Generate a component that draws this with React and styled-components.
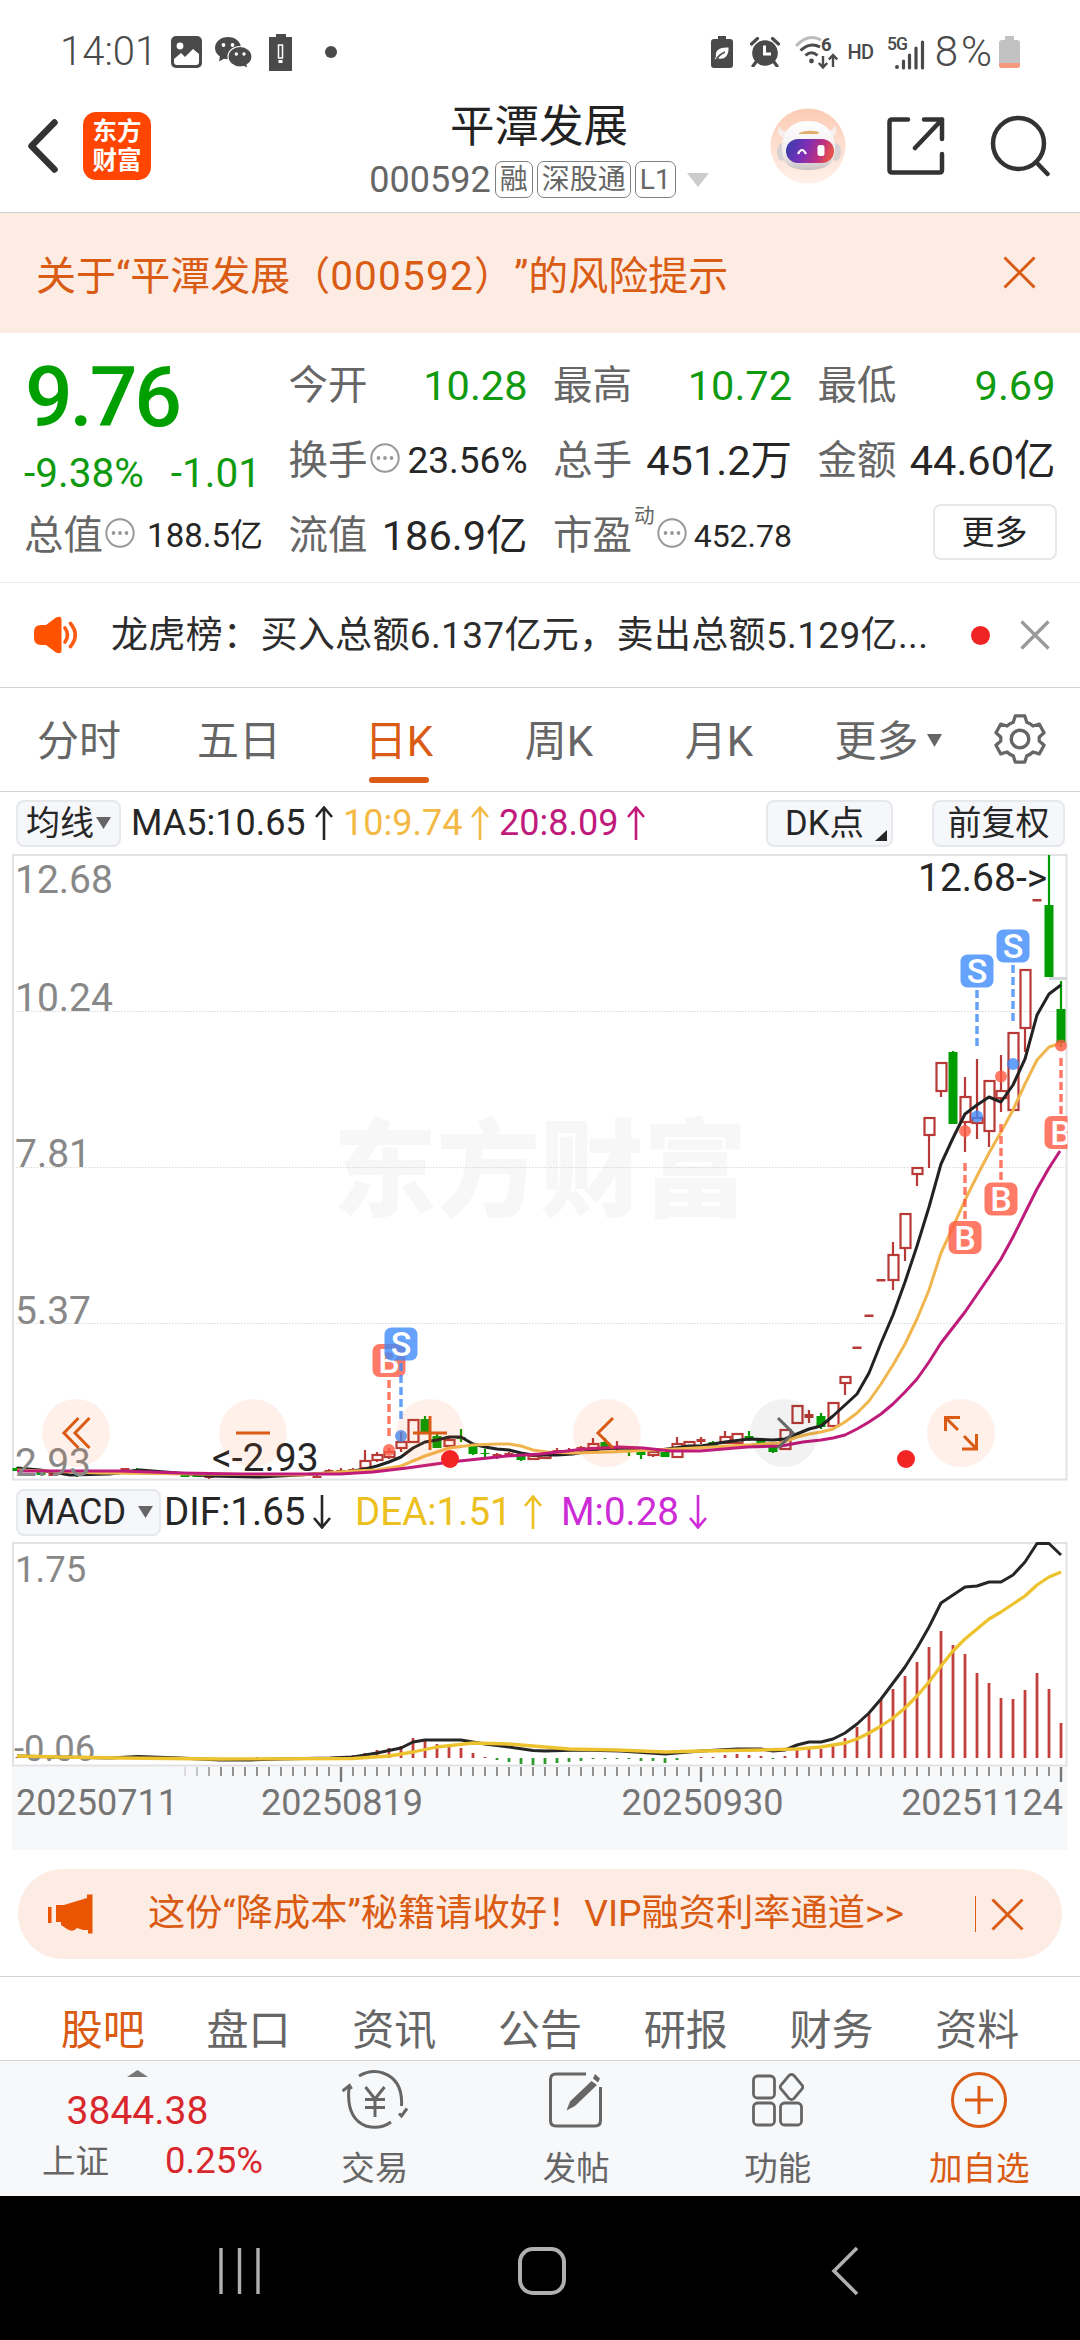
import React from "react";
import styled, { createGlobalStyle } from "styled-components";

const FONT = `Roboto, "Noto Sans CJK SC", "Noto Sans", sans-serif`;
const ORANGE = "#d95b14";
const INK = "#262626";
const GREY = "#666";
const GREEN = "#0f9a0f";

const Global = createGlobalStyle`
  * { box-sizing: border-box; }
  html, body { margin: 0; padding: 0; background: #fff; }
  body { font-family: ${FONT}; line-height: 1; color: ${INK}; text-spacing-trim: space-all; }
  svg { display: block; flex: none; }
`;

const Screen = styled.div`
  width: 1080px;
  height: 2340px;
  display: flex;
  flex-direction: column;
  overflow: hidden;
  background: #fff;
`;

const Txt = styled.span`
  font-size: ${(p) => p.$size}px;
  color: ${(p) => p.$color || INK};
  font-weight: ${(p) => p.$weight || 400};
  letter-spacing: ${(p) => p.$ls || 0}px;
  line-height: 1;
  white-space: nowrap;
`;

/* ---------- status bar ---------- */
const StatusBar = styled.div`
  height: 84px;
  padding: 20px 60px 0 60px;
  display: flex;
  justify-content: space-between;
  align-items: center;
`;
const StatusGroup = styled.div`
  display: flex;
  align-items: center;
`;
const Gap = styled.i`
  width: ${(p) => p.$w}px;
  flex: none;
`;
const DARK = "#4a4a4a";

const PhotoIcon = () => (
  <svg width="31" height="32" viewBox="0 0 31 32">
    <rect width="31" height="32" rx="5" fill={DARK} />
    <circle cx="9" cy="10" r="3.4" fill="#fff" />
    <path d="M3 23 L10 17 L14 21 L22 13 L28 18 V26 Q28 29 25 29 H6 Q3 29 3 26Z" fill="#fff" />
  </svg>
);
const WechatIcon = () => (
  <svg width="38" height="33" viewBox="0 0 38 33">
    <path d="M13 1C5.800 1 0 5.800 0 12c0 3.500 1.900 6.500 4.900 8.600L4 25.500l5-2.800c1.300.3 2.600.5 4 .5 7.200 0 13-5 13-11.200S20.200 1 13 1Z" fill={DARK} />
    <path d="M25 10.500c-6.700 0-12 4.500-12 10.200S18.300 31 25 31c1.300 0 2.600-.2 3.800-.5l4.200 2.300-.9-4C35 27 37 24 37 20.700c0-5.700-5.300-10.200-12-10.200Z" fill={DARK} stroke="#fff" strokeWidth="1.200" />
    <circle cx="8.500" cy="9" r="1.900" fill="#fff" />
    <circle cx="17.500" cy="9" r="1.900" fill="#fff" />
    <circle cx="21.300" cy="18" r="1.700" fill="#fff" />
    <circle cx="29" cy="18" r="1.700" fill="#fff" />
  </svg>
);
const BatteryAlertIcon = () => (
  <svg width="23" height="37" viewBox="0 0 23 37">
    <path d="M7 0h10v3h6v34H0V3h7Z" fill={DARK} />
    <rect x="9.500" y="11" width="4" height="13" fill="none" stroke="#fff" strokeWidth="1.500" />
    <rect x="9.500" y="26" width="4" height="3" fill="#fff" />
  </svg>
);
const LeafBatteryIcon = () => (
  <svg width="22" height="32" viewBox="0 0 22 32">
    <path d="M7 0h8v3h4q3 0 3 3v23q0 3-3 3H3q-3 0-3-3V6q0-3 3-3h4Z" fill={DARK} />
    <path d="M17.500 11.500C9 11 4 14 5 20.500L3.500 23.500l3-1.500C13 24.500 18 20 17.500 11.500Z" fill="#fff" />
    <path d="M5.500 22.500 Q9 18 14 16" stroke={DARK} strokeWidth="1.500" fill="none" />
  </svg>
);
const AlarmIcon = () => (
  <svg width="30" height="30" viewBox="0 0 30 30">
    <circle cx="15" cy="16" r="12.800" fill={DARK} />
    <path d="M1.500 7 L7.500 1.500 M28.500 7 L22.500 1.500 M6 25 L3 29 M24 25 L27 29" stroke={DARK} strokeWidth="3.200" strokeLinecap="round" />
    <path d="M14.500 8.500 V17 H21" stroke="#fff" strokeWidth="3" fill="none" />
  </svg>
);
const WifiIcon = () => (
  <svg width="43" height="39" viewBox="0 -3 43 39">
    <path d="M1 10 Q13 -3 26 4" stroke="#bbb" strokeWidth="3" fill="none" />
    <path d="M5.500 14.500 Q15 5.500 25 11" stroke={DARK} strokeWidth="3" fill="none" />
    <path d="M10.500 19.500 Q16.500 14 22.500 19.500" stroke={DARK} strokeWidth="3" fill="none" />
    <circle cx="16.500" cy="25" r="2.400" fill={DARK} />
    <path d="M28 20V31M23.800 27l4.200 4.500 4.200-4.500M38 31V19.500M33.800 23.500l4.200-4.500 4.200 4.500" stroke={DARK} strokeWidth="2.400" fill="none" />
    <text x="26" y="15" fontSize="18.500" fontWeight="700" fontFamily={FONT} fill={DARK}>6</text>
  </svg>
);
const SignalIcon = () => (
  <svg width="38" height="38" viewBox="0 -2 38 38">
    <text x="0" y="14.500" fontSize="17.500" fontWeight="500" fontFamily={FONT} fill={DARK} textLength="21">5G</text>
    <path d="M16.500 26V33M22.500 20V33M29 13V33M35.500 7V33" stroke={DARK} strokeWidth="3.200" strokeLinecap="round" />
    <circle cx="10" cy="32" r="2" fill={DARK} />
  </svg>
);
const BatteryIcon = () => (
  <svg width="21" height="32" viewBox="0 0 21 32">
    <path d="M6 0h9v4h3q3 0 3 3v22q0 3-3 3H3q-3 0-3-3V7q0-3 3-3h3Z" fill="#c2c2c2" />
    <path d="M0 27h21v2q0 3-3 3H3q-3 0-3-3Z" fill="#f59a7c" />
  </svg>
);

/* ---------- header ---------- */
const Header = styled.header`
  height: 129px;
  padding: 0 29px 5px 27px;
  display: grid;
  grid-template-columns: 1fr auto 1fr;
  align-items: center;
  border-bottom: 1px solid #cfcfd2;
`;
const HeaderSide = styled.div`
  display: flex;
  align-items: center;
  justify-content: ${(p) => (p.$end ? "flex-end" : "flex-start")};
`;
const Logo = styled.div`
  width: 68px;
  height: 68px;
  margin-left: 25px;
  border-radius: 13px;
  background: #ff4500;
  color: #fff;
  font-size: 24.500px;
  font-weight: 700;
  line-height: 29px;
  text-align: center;
  padding-top: 5px;
`;
const TitleBlock = styled.div`
  margin-top: 10px;
  display: flex;
  flex-direction: column;
  align-items: center;
  gap: 10px;
`;
const Title = styled.h1`
  margin: 0;
  font-size: 44.500px;
  font-weight: 400;
  line-height: 48px;
  color: #222;
`;
const SubTitle = styled.div`
  height: 37px;
  display: flex;
  align-items: center;
  gap: 4px;
`;
const Tag = styled.span`
  height: 37px;
  padding: 0 4px;
  border: 1.500px solid #808080;
  border-radius: 7px;
  font-size: 28px;
  line-height: 35px;
  color: ${GREY};
`;

const RobotIcon = () => (
  <svg width="76" height="76" viewBox="0 0 76 76">
    <defs>
      <linearGradient id="halo" x1="0" y1="0" x2="0" y2="1">
        <stop offset="0" stopColor="#fccbb4" />
        <stop offset="1" stopColor="#fff1ea" />
      </linearGradient>
      <linearGradient id="visor" x1="0" y1="0" x2="1" y2="0.200">
        <stop offset="0" stopColor="#2f3fa8" />
        <stop offset="0.450" stopColor="#7a2fb8" />
        <stop offset="0.800" stopColor="#c0307e" />
        <stop offset="1" stopColor="#e2504e" />
      </linearGradient>
      <linearGradient id="shell" x1="0" y1="0" x2="0" y2="1">
        <stop offset="0" stopColor="#fff" />
        <stop offset="0.700" stopColor="#eeeaea" />
        <stop offset="1" stopColor="#c9c2c2" />
      </linearGradient>
    </defs>
    <circle cx="38" cy="38" r="37.500" fill="url(#halo)" />
    <path d="M9 18Q6 28 15 30L20 24Q11 24 9 18ZM65 17Q69 27 60 30L55 24Q64 23 65 17Z" fill="#f4efee" />
    <ellipse cx="12" cy="44" rx="5" ry="9" fill="#d8d2d2" />
    <ellipse cx="66" cy="44" rx="5" ry="9" fill="#d8d2d2" />
    <path d="M38 13C55 13 65 24 65 40C65 56 57 62 38 62S12 56 12 40C12 24 21 13 38 13Z" fill="url(#shell)" />
    <path d="M29 25Q38 21 49 24L48 26H29Z" fill="#e3ab6c" />
    <rect x="16" y="31" width="48" height="24" rx="12" fill="url(#visor)" />
    <path d="M28 46Q32 38 36 46" stroke="#fff" strokeWidth="2.200" fill="none" />
    <rect x="47.500" y="37" width="7" height="11" rx="2.500" fill="#fff" />
  </svg>
);

/* ---------- warning banner ---------- */
const Warning = styled.div`
  height: 120px;
  padding: 6px 44px 0 36px;
  background: #fcece3;
  display: flex;
  align-items: center;
  justify-content: space-between;
  svg { margin-bottom: 8px; }
`;
const Cross = ({ size, color, width }) => (
  <svg width={size} height={size} viewBox={`0 0 ${size} ${size}`}>
    <path d={`M1.500 1.500L${size - 1.5} ${size - 1.5}M${size - 1.5} 1.500L1.500 ${size - 1.5}`} stroke={color} strokeWidth={width} />
  </svg>
);

/* ---------- quote ---------- */
const Quote = styled.section`
  height: 250px;
  padding: 15px 24px 0 24px;
  display: grid;
  grid-template-columns: 239px 239px 239px 238px;
  grid-template-rows: repeat(3, 75px);
  column-gap: 25.500px;
  border-bottom: 1px solid #ebebeb;
`;
const PriceCell = styled.div`
  grid-row: span 2;
  display: flex;
  flex-direction: column;
`;
const Price = styled.div`
  height: 100px;
  padding-left: 1px;
  font-size: 84px;
  font-weight: 500;
  letter-spacing: -3.200px;
  line-height: 100px;
  color: #009f00;
`;
const Change = styled.div`
  display: flex;
  justify-content: space-between;
  height: 50px;
  align-items: center;
  padding-right: 2px;
`;
const Cell = styled.div`
  display: flex;
  align-items: center;
  justify-content: space-between;
`;
const Label = styled.div`
  display: flex;
  align-items: center;
  height: 44px;
  font-size: 39.500px;
  color: ${GREY};
  svg { margin: -6px 0 0 2px; }
`;
const Sup = styled.span`
  font-size: 20.500px;
  margin: -38px 0 0 2px;
`;
const MoreButton = styled.button`
  width: 124px;
  height: 56px;
  margin: 0 -1px 8px auto;
  padding: 0 0 4px;
  border: 2px solid #e6e7ea;
  border-radius: 8px;
  background: #fff;
  font: 33px ${FONT};
  color: ${INK};
`;
const InfoIcon = () => (
  <svg width="30" height="30" viewBox="0 0 30 30">
    <circle cx="15" cy="15" r="13.700" fill="none" stroke="#999" strokeWidth="2" />
    <circle cx="8.500" cy="15" r="1.900" fill="#999" />
    <circle cx="15" cy="15" r="1.900" fill="#999" />
    <circle cx="21.500" cy="15" r="1.900" fill="#999" />
  </svg>
);
const Item = ({ label, value, info, sup, color, size = 41.5 }) => (
  <Cell>
    <Label>
      {label}
      {sup && <Sup>{sup}</Sup>}
      {info && <InfoIcon />}
    </Label>
    <Txt $size={size} $color={color}>{value}</Txt>
  </Cell>
);

/* ---------- news ---------- */
const News = styled.div`
  height: 105px;
  padding: 0 30px 0 34px;
  display: flex;
  align-items: center;
  border-bottom: 1px solid #d4d4d6;
`;
const NewsText = styled.div`
  width: 836px;
  margin-left: 32px;
  font-size: 37px;
  letter-spacing: 0.350px;
  white-space: nowrap;
  color: #2c2c2c;
`;
const Dot = styled.i`
  width: ${(p) => p.$d}px;
  height: ${(p) => p.$d}px;
  border-radius: 50%;
  background: ${(p) => p.$color};
  flex: none;
`;

/* ---------- period tabs ---------- */
const Periods = styled.nav`
  height: 104px;
  display: flex;
  margin-left: -1px;
  border-bottom: 1px solid #d4d4d6;
`;
const Period = styled.div`
  width: ${(p) => p.$w || 160}px;
  padding-top: 33px;
  display: flex;
  flex-direction: column;
  align-items: center;
  font-size: 42px;
  color: ${(p) => (p.$on ? ORANGE : GREY)};
  &::after {
    content: "";
    width: 60px;
    height: 6px;
    margin-top: 14px;
    border-radius: 3px;
    background: ${(p) => (p.$on ? ORANGE : "transparent")};
  }
`;
const PeriodMore = styled.div`
  display: flex;
  align-items: center;
  gap: 8px;
  svg { margin-top: -4px; }
`;
const GearBox = styled.div`
  padding-top: 25px;
  margin-left: 17px;
`;
const Down = ({ w, h, color = GREY }) => (
  <svg width={w} height={h} viewBox={`0 0 ${w} ${h}`}>
    <path d={`M0 0H${w}L${w / 2} ${h}Z`} fill={color} />
  </svg>
);

/* ---------- indicator rows ---------- */
const IndicatorRow = styled.div`
  height: 56px;
  padding: ${(p) => p.$pt || 0}px 16px 0;
  display: flex;
  align-items: center;
`;
const Chip = styled.div`
  width: ${(p) => p.$w}px;
  height: 47px;
  margin-left: ${(p) => p.$ml || 0}px;
  padding: 0 ${(p) => p.$px || 0}px;
  display: flex;
  align-items: center;
  justify-content: ${(p) => (p.$spread ? "space-between" : "center")};
  flex: none;
  border: 2px solid #e6e8ec;
  border-radius: 8px;
  background: #f6f7fa;
  font-size: ${(p) => p.$size || 34}px;
  color: ${INK};
`;
const Metric = styled.div`
  width: ${(p) => p.$w}px;
  display: flex;
  align-items: center;
  gap: ${(p) => p.$gap || 9}px;
  flex: none;
  font-size: ${(p) => p.$size}px;
  color: ${(p) => p.$color};
  white-space: nowrap;
`;
const Arrow = ({ down, color }) => (
  <svg width="18" height="34" viewBox="0 0 18 34">
    <path d={down ? "M9 0V32M1 23L9 32.500L17 23" : "M9 34V2M1 11L9 1.500L17 11"} stroke={color} strokeWidth="2.600" fill="none" />
  </svg>
);
const CornerMark = styled.i`
  align-self: flex-end;
  margin-bottom: 4px;
  border-left: 12px solid transparent;
  border-bottom: 11px solid ${INK};
`;

/* ---------- charts ---------- */
const ChartBox = styled.div`
  position: relative;
  height: ${(p) => p.$h}px;
`;
const Controls = styled.div`
  position: absolute;
  left: 42px;
  bottom: 17px;
  display: flex;
  gap: 109px;
`;
const Round = styled.div`
  width: 68px;
  height: 68px;
  border-radius: 50%;
  display: flex;
  align-items: center;
  justify-content: center;
  background: ${(p) => (p.$off ? "rgba(0,0,0,0.05)" : "rgba(255,100,20,0.095)")};
`;
const Badge = styled(Dot)`
  position: absolute;
  left: ${(p) => p.$x}px;
  bottom: 16px;
`;

const X = (k) => 1061 - 12 * k;
const RED = "#b83a36";
const GRN = "#009d00";

/* [k, type, high, top, bottom, low]; type r = hollow, f = filled red, g = green */
const candles = [
  [0, "g", 981, 1009, 1043, 1047], [1, "g", 855, 905, 977, 977], [2, "f", 899, 899, 901.5, 901],
  [3, "r", 970, 970, 1028, 1052], [4, "r", 1033, 1033, 1110, 1110], [5, "r", 1055, 1091, 1098, 1112],
  [6, "r", 1081, 1081, 1131, 1147], [7, "r", 1059, 1118, 1123, 1139], [8, "r", 1077, 1097, 1122, 1152],
  [9, "g", 1051, 1052, 1124, 1124], [10, "r", 1063, 1063, 1091, 1097], [11, "r", 1118, 1118, 1135, 1168],
  [12, "r", 1168, 1168, 1174, 1186], [13, "r", 1214, 1214, 1248, 1261], [14, "r", 1242, 1255, 1280, 1290],
  [15, "f", 1279, 1279, 1281.5, 1281], [16, "f", 1314.5, 1314.5, 1317, 1316], [17, "f", 1346.5, 1346.5, 1349, 1348],
  [18, "r", 1377, 1377, 1383, 1395], [19, "r", 1403, 1403, 1426, 1426], [20, "g", 1413, 1416, 1427, 1429],
  [21, "f", 1410, 1414, 1418, 1423], [22, "r", 1406, 1406, 1423, 1423], [23, "r", 1430, 1430, 1449, 1449],
  [24, "g", 1446, 1447, 1452, 1453], [25, "g", 1438, 1440, 1444, 1445], [26, "g", 1431, 1436, 1439, 1441],
  [27, "r", 1433, 1434, 1443, 1444], [28, "r", 1431, 1437, 1443, 1443], [29, "g", 1441, 1442, 1446, 1447],
  [30, "f", 1437, 1439, 1442, 1444], [31, "r", 1441, 1442, 1446, 1447], [32, "r", 1437, 1444, 1457, 1457],
  [33, "g", 1452, 1452, 1457, 1457], [34, "r", 1451, 1452, 1455, 1457], [35, "g", 1450, 1451, 1455, 1459],
  [36, "g", 1447, 1448, 1449, 1456], [37, "f", 1441, 1446, 1448, 1451], [38, "g", 1438, 1442, 1447, 1448],
  [39, "r", 1438, 1444, 1448, 1449], [40, "f", 1446, 1447, 1450, 1450], [41, "f", 1448, 1450, 1452, 1453],
  [42, "f", 1448, 1450, 1452, 1455], [43, "r", 1454, 1455, 1458, 1459], [44, "r", 1455, 1456, 1459, 1459],
  [45, "g", 1455, 1456, 1460, 1461], [46, "f", 1452, 1453, 1455, 1456], [47, "f", 1453, 1454, 1456, 1459],
  [48, "g", 1449, 1453, 1454, 1457], [49, "g", 1445, 1446, 1454, 1455], [50, "g", 1429, 1437, 1439, 1442],
  [51, "r", 1438, 1440, 1446, 1447], [52, "g", 1434, 1436, 1448, 1448], [53, "g", 1416, 1419, 1432, 1433],
  [54, "r", 1420, 1420, 1442, 1442], [55, "r", 1432, 1442, 1448, 1452], [56, "r", 1448, 1452, 1457, 1459],
  [57, "r", 1452, 1455, 1460, 1462], [58, "r", 1450, 1461, 1468, 1468], [59, "f", 1468, 1469, 1471, 1471],
  [60, "f", 1468, 1470, 1472, 1472], [61, "f", 1469, 1470, 1473, 1473], [62, "f", 1475, 1476, 1478, 1478],
  [63, "g", 1473, 1474, 1476, 1476], [65, "g", 1474, 1475, 1477, 1477], [67, "f", 1474, 1475, 1477, 1477],
  [71, "f", 1474, 1476, 1478, 1479], [72, "g", 1474, 1475, 1477, 1477], [73, "g", 1474, 1475, 1477, 1477],
  [76, "g", 1472, 1473, 1475, 1475], [77, "g", 1468, 1469, 1471, 1471], [78, "f", 1468, 1468, 1471, 1471],
  [81, "f", 1472, 1473, 1475, 1475], [82, "g", 1473, 1474, 1476, 1477], [84, "f", 1472, 1473, 1476, 1476],
  [85, "g", 1472, 1472, 1475, 1475], [87, "g", 1467, 1468, 1471, 1471],
];

const ma5 = "17,1468 40,1470 70,1475 110,1474 140,1470 190,1474 210,1476 260,1477 300,1475 341,1472 353,1471 365,1469 377,1466 389,1462 401,1457 413,1448 425,1442 437,1440 449,1437 461,1437 473,1444 485,1447 497,1449 509,1450 521,1453 533,1455 557,1455 573,1454 600,1449 620,1448 660,1450 689,1446 701,1446 725,1442 749,1439 773,1440 785,1439 797,1434 809,1429 821,1426 833,1416 845,1405 857,1394 869,1373 881,1343 893,1315 905,1282 917,1246 929,1207 941,1164 953,1138 965,1114 977,1105 989,1097 1001,1102 1013,1085 1025,1059 1037,1015 1049,994 1061,985";
const ma10 = "17,1470 100,1473 200,1474 300,1475 353,1471 377,1470 401,1466 413,1461 425,1456 449,1448 473,1445 497,1444 509,1444 521,1446 533,1450 547,1452 573,1453 609,1452 654,1450 695,1448 747,1445 781,1443 797,1437 809,1434 821,1432 833,1429 845,1422 857,1413 869,1401 881,1384 893,1365 905,1344 917,1319 929,1290 941,1253 953,1227 965,1200 977,1176 989,1153 1001,1132 1013,1110 1025,1084 1037,1060 1049,1047 1055,1045 1061,1044";
const ma20 = "17,1471 120,1471 180,1473 240,1474 340,1474 373,1472 407,1468 450,1462 507,1456 540,1454 585,1449 619,1447 643,1448 671,1451 700,1451 747,1447 781,1446 803,1442 821,1440 833,1438 845,1435 857,1429 869,1422 881,1414 893,1404 905,1392 917,1379 929,1362 941,1343 965,1312 989,1277 1001,1259 1013,1237 1025,1213 1037,1189 1049,1168 1060,1151";

const signals = [
  { t: "B", x: 389, box: 1360.5, d0: 1380, dot: 1450 },
  { t: "S", x: 401, box: 1344, d0: 1363, dot: 1436 },
  { t: "S", x: 977, box: 971, d0: 990, dot: 1116.5 },
  { t: "S", x: 1013, box: 946, d0: 965, dot: 1064 },
  { t: "B", x: 965, box: 1237.5, d0: 1163, dot: 1131 },
  { t: "B", x: 1001, box: 1199, d0: 1124, dot: 1076.5 },
  { t: "B", x: 1061, box: 1132.5, d0: 1058, dot: 1045.5 },
];

const Signal = ({ t, x, box, d0, dot }) => {
  const fill = t === "B" ? "#ff5a42" : "#3d8bfb";
  return (
    <g>
      <rect x={x - 16.5} y={box - 16.5} width="33" height="33" rx="7" fill={fill} fillOpacity="0.800" />
      <text x={x} y={box + 12} textAnchor="middle" fontSize="34" fontWeight="500" fill="#fff">{t}</text>
      <path d={`M${x} ${d0}V${d0 + 56}`} stroke={fill} strokeOpacity="0.800" strokeWidth="3.500" strokeDasharray="8 4" />
      <circle cx={x} cy={dot} r="6" fill={fill} fillOpacity="0.800" />
    </g>
  );
};

const Candle = ({ c: [k, type, hi, top, bot, lo] }) => {
  const x = X(k);
  const color = type === "g" ? GRN : RED;
  return (
    <g>
      {hi < top && <path d={`M${x} ${hi}V${top}`} stroke={color} strokeWidth="2.200" />}
      {lo > bot && <path d={`M${x} ${bot}V${lo}`} stroke={color} strokeWidth="2.200" />}
      {type === "r" ? (
        <rect x={x - 4.5} y={top} width="10" height={bot - top} fill="none" stroke={color} strokeWidth="2.200" />
      ) : (
        <rect x={x - 4.5} y={top} width="9" height={bot - top} fill={color} />
      )}
    </g>
  );
};

const KLine = () => (
  <svg width="1080" height="636" viewBox="0 848 1080 636" fontFamily={FONT}>
    <defs>
      <clipPath id="plot"><rect x="12" y="854" width="1055.500" height="626" /></clipPath>
    </defs>
    <text x="333" y="1208" fontSize="106" fontWeight="900" fill="#f7f7f7" textLength="414" lengthAdjust="spacingAndGlyphs">东方财富</text>
    {[1011.5, 1167.5, 1323.5].map((y) => (
      <path key={y} d={`M13 ${y}H1067`} stroke="#d9d9d9" strokeWidth="1" strokeDasharray="1.500 1.500" />
    ))}
    <rect x="13" y="855" width="1053.500" height="624.500" fill="none" stroke="#e2e2e4" strokeWidth="2" />
    <path d="M1049 978.500H1067" stroke="#d3d7da" strokeWidth="3" />
    <g clipPath="url(#plot)">
      {candles.map((c) => <Candle key={c[0]} c={c} />)}
      <g fill="none" strokeWidth="3" strokeLinejoin="round">
        <polyline points={ma5} stroke="#222" />
        <polyline points={ma10} stroke="#f0b64d" />
        <polyline points={ma20} stroke="#bf1b7b" />
      </g>
      {signals.map((s, i) => <Signal key={i} {...s} />)}
    </g>
    <g fontSize="39" fill="#888">
      <text x="15" y="893">12.68</text>
      <text x="15" y="1011">10.24</text>
      <text x="15" y="1167">7.81</text>
      <text x="15" y="1324">5.37</text>
      <text x="15" y="1475.500">2.93</text>
    </g>
    <g fontSize="39" fill={INK}>
      <text x="918" y="890.500">12.68-&gt;</text>
      <text x="212" y="1470.500">&lt;-2.93</text>
    </g>
  </svg>
);

const barTops = [
  1723, 1689, 1673, 1690, 1699, 1698, 1683, 1673, 1654, 1645, 1631, 1647, 1662, 1676, 1689, 1700, 1714, 1727,
  1738, 1746, 1749, 1747, 1749, 1756, 1759, 1756, 1755, 1754, 1755, 1757, 1757, 1758, 1760, 1763, 1761, 1761,
  1759, 1759, 1759, 1759, 1761, 1762, 1763, 1764, 1765, 1764, 1762, 1760, 1757, 1753, 1748, 1746, 1744, 1739,
  1738, 1746, 1748, 1750, 1753, 1755, 1756, 1757, 1757, 1757, 1757, 1757, 1758, 1757, 1758, 1758, 1759, 1759,
  1759, 1759, 1758, 1757, 1757, 1757, 1757, 1758, 1759, 1759, 1759, 1760, 1759, 1758, 1757, 1757,
];
const dif = "17,1756 60,1757 110,1758 138,1756.500 180,1758 220,1760 250,1760 280,1759 330,1758 353,1757 377,1753 401,1748 413,1742 425,1740 461,1740 485,1744 509,1747 533,1750.500 545,1751 581,1750 620,1751 665,1754 701,1751 737,1749 761,1749 773,1751 785,1750 797,1745 809,1742 821,1742 833,1739 845,1733 857,1724 869,1713 881,1699 893,1683 905,1667 917,1648 929,1627 941,1603 953,1595 965,1587 977,1586 989,1582 1001,1582 1013,1575 1025,1562 1037,1543.500 1049,1543.500 1061,1555";
const dea = "17,1756 60,1757 120,1758 220,1759 353,1758.500 389,1756 413,1752 437,1747 473,1743 509,1744 545,1747 569,1749 617,1750 665,1752 701,1751 761,1750 797,1749 821,1747 845,1743 857,1739 869,1733 881,1726 893,1718 905,1708 917,1696 929,1682 941,1666 953,1651 965,1639 977,1629 989,1619 1001,1612 1013,1604 1025,1596 1037,1585 1049,1577 1061,1572";

const Macd = () => (
  <svg width="1080" height="310" viewBox="0 1540 1080 310" fontFamily={FONT}>
    <defs>
      <clipPath id="macdPlot"><rect x="12" y="1542" width="1055.500" height="224" /></clipPath>
    </defs>
    <rect x="12" y="1766" width="1055.500" height="84" fill="#f7f8fa" />
    <rect x="13" y="1543" width="1053.500" height="222.500" fill="#fff" stroke="#e2e2e4" strokeWidth="2" />
    {barTops.map((y, k) => (
      <path key={k} d={`M${X(k)} 1758V${y}`} stroke={y > 1758 ? "#2f9a2f" : "#c2403c"} strokeWidth="2.800" />
    ))}
    <g fontSize="36.500" fill="#888">
      <text x="15" y="1582">1.75</text>
      <text x="14" y="1760.500">-0.06</text>
    </g>
    <g clipPath="url(#macdPlot)" fill="none" strokeLinejoin="round">
      <polyline points={dif} stroke="#262626" strokeWidth="3" />
      <polyline points={dea} stroke="#ecc22f" strokeWidth="3.300" />
    </g>
    {barTops.slice(0, 74).map((_, k) => {
      const long = k % 30 === 0;
      return (
        <path key={k} d={`M${X(k)} 1767V${long ? 1782 : 1776}`} stroke="#777" strokeWidth={long ? 2.4 : 1.6} opacity={k > 70 ? 0.25 * (74 - k) : 1} />
      );
    })}
    <g fontSize="36" fill="#757575">
      <text x="16" y="1815">20250711</text>
      <text x="342" y="1815" textAnchor="middle">20250819</text>
      <text x="702.500" y="1815" textAnchor="middle">20250930</text>
      <text x="1063" y="1815" textAnchor="end">20251124</text>
    </g>
  </svg>
);

/* ---------- promo ---------- */
const Promo = styled.div`
  height: 90px;
  margin: 19px 18px 17px;
  padding: 0 38px 0 29px;
  border-radius: 45px;
  background: #fcece3;
  display: flex;
  align-items: center;
`;
const PromoText = styled.div`
  flex: 1;
  margin-left: 55px;
  font-size: 37.250px;
  color: ${ORANGE};
  white-space: nowrap;
`;
const Divider = styled.i`
  width: 1.500px;
  height: 36px;
  margin-right: 15px;
  background: ${ORANGE};
`;

/* ---------- section tabs ---------- */
const Sections = styled.nav`
  height: 85px;
  padding: 16px 30px 0 30px;
  border-top: 1px solid #d4d4d6;
  border-bottom: 1px solid #d4d4d6;
  display: grid;
  grid-template-columns: repeat(7, 1fr);
`;
const SectionTab = styled.div`
  text-align: center;
  font-size: 42px;
  line-height: 76px;
  color: ${(p) => (p.$on ? ORANGE : GREY)};
`;

/* ---------- bottom bar ---------- */
const BottomBar = styled.div`
  height: 135px;
  display: grid;
  grid-template-columns: 274px repeat(4, 1fr);
  background: #f7f8fa;
`;
const IndexCell = styled.div`
  padding: 9px 10px 0 42px;
  display: flex;
  flex-direction: column;
`;
const IndexTop = styled.div`
  width: 191px;
  display: flex;
  flex-direction: column;
  align-items: center;
  gap: 15px;
`;
const IndexRow = styled.div`
  width: 221px;
  margin-top: 12px;
  display: flex;
  align-items: center;
  justify-content: space-between;
`;
const Action = styled.div`
  padding-top: 9px;
  display: flex;
  flex-direction: column;
  align-items: center;
  gap: 22px;
  font-size: 33.500px;
  color: ${(p) => (p.$hot ? ORANGE : GREY)};
`;
const TradeIcon = () => (
  <svg width="66" height="60" viewBox="0 0 66 60" fill="none" stroke={GREY} strokeWidth="3">
    <path d="M17 6Q29 -1 41 3Q61 10 59.500 36M49 52Q38 60 24 56Q4 48 7 18" />
    <path d="M0.500 21L7.500 15.500L9.500 19M57 43.500L59.500 46L65 38.500" />
    <path d="M23.500 17L33 29L42.500 17M33 29V47M23 29.500H43M23 37.500H43" />
  </svg>
);
const PostIcon = () => (
  <svg width="56" height="60" viewBox="0 0 56 60" fill="none" stroke={GREY} strokeWidth="3">
    <path d="M38 4H8Q2.500 4 2.500 9.500V50.500Q2.500 56 8 56H47Q52.500 56 52.500 50.500V17" />
    <path d="M47 4L52 8.500L50 12.500L45 8.500Z" fill={GREY} stroke="none" />
    <path d="M43.500 11L49 15L27 36L18.500 40.500L22 31.500Z" fill={GREY} stroke="none" />
  </svg>
);
const GridIcon = () => (
  <svg width="52" height="60" viewBox="0 0 52 60" fill="none" stroke={GREY} strokeWidth="2.800">
    <rect x="1.500" y="6" width="21" height="22" rx="4" />
    <rect x="1.500" y="33" width="21" height="22" rx="4" />
    <rect x="28.500" y="33" width="21" height="22" rx="4" />
    <path d="M37 5.500Q39.500 3.500 42 5.500L50 15Q51.500 17 50 19L42 28.500Q39.500 30.500 37 28.500L29 19Q27.500 17 29 15Z" />
  </svg>
);
const AddIcon = () => (
  <svg width="58" height="60" viewBox="0 0 58 60" fill="none" stroke={ORANGE} strokeWidth="3">
    <circle cx="29" cy="30" r="26.500" />
    <path d="M15 30H43M29 16V44" />
  </svg>
);

/* ---------- system navigation ---------- */
const SystemNav = styled.div`
  height: 144px;
  padding: 6px 221px 0 219px;
  background: #000;
  display: flex;
  align-items: center;
  justify-content: space-between;
`;
const HomeKey = styled.i`
  width: 48px;
  height: 48px;
  margin-right: 8px;
  border: 4px solid #b0b0b0;
  border-radius: 15px;
`;

export default function App() {
  return (
    <Screen>
      <Global />
      <StatusBar>
        <StatusGroup>
          <Txt $size={40} $weight={300} $color={DARK}>14:01</Txt>
          <Gap $w={14} />
          <PhotoIcon />
          <Gap $w={13} />
          <WechatIcon />
          <Gap $w={16} />
          <BatteryAlertIcon />
          <Gap $w={33} />
          <Dot $d={12} $color={DARK} />
        </StatusGroup>
        <StatusGroup>
          <LeafBatteryIcon />
          <Gap $w={17} />
          <AlarmIcon />
          <Gap $w={15} />
          <WifiIcon />
          <Gap $w={9} />
          <Txt $size={20} $weight={500} $color={DARK} $ls={-0.5}>HD</Txt>
          <Gap $w={13} />
          <SignalIcon />
          <Gap $w={10} />
          <Txt $size={42} $weight={300} $color={DARK} $ls={3}>8%</Txt>
          <Gap $w={4} />
          <BatteryIcon />
        </StatusGroup>
      </StatusBar>

      <Header>
        <HeaderSide>
          <svg width="31" height="56" viewBox="0 0 31 56">
            <path d="M27.500 4.500L4.500 28L27.500 51.500" stroke="#333" strokeWidth="6.500" strokeLinecap="round" strokeLinejoin="round" fill="none" />
          </svg>
          <Logo>东方<br />财富</Logo>
        </HeaderSide>
        <TitleBlock>
          <Title>平潭发展</Title>
          <SubTitle>
            <Txt $size={36} $color={GREY}>000592</Txt>
            <Tag>融</Tag>
            <Tag>深股通</Tag>
            <Tag>L1</Tag>
            <Gap $w={3} />
            <Down w={22} h={14} color="#ccc" />
          </SubTitle>
        </TitleBlock>
        <HeaderSide $end>
          <RobotIcon />
          <Gap $w={41} />
          <svg width="58" height="58" viewBox="0 0 58 58" fill="none" stroke="#333" strokeWidth="4.500" strokeLinecap="round" strokeLinejoin="round">
            <path d="M21 2.500H5Q2.500 2.500 2.500 5V53Q2.500 55.500 5 55.500H52.500Q55 55.500 55 53V37" />
            <path d="M37 2.500H55V22M55 2.500L28 31" />
          </svg>
          <Gap $w={45} />
          <svg width="61" height="62" viewBox="0 0 61 62" fill="none" stroke="#333" strokeWidth="4.500" strokeLinecap="round">
            <circle cx="28.500" cy="28.500" r="25.500" />
            <path d="M46 47L57.500 59" />
          </svg>
        </HeaderSide>
      </Header>

      <Warning>
        <Txt $size={40} $color={ORANGE}>
          关于“平潭发展（<Txt $size={40.5} $color={ORANGE} $ls={1.2}>000592</Txt>）”的风险提示
        </Txt>
        <Cross size={33} color={ORANGE} width={3} />
      </Warning>

      <Quote>
        <PriceCell>
          <Price>9.76</Price>
          <Change>
            <Txt $size={40.5} $color={GREEN}>-9.38%</Txt>
            <Txt $size={40.5} $color={GREEN}>-1.01</Txt>
          </Change>
        </PriceCell>
        <Item label="今开" value="10.28" color={GREEN} />
        <Item label="最高" value="10.72" color={GREEN} />
        <Item label="最低" value="9.69" color={GREEN} />
        <Item label="换手" value="23.56%" info size={37} />
        <Item label="总手" value="451.2万" />
        <Item label="金额" value="44.60亿" />
        <Item label="总值" value="188.5亿" info size={33} />
        <Item label="流值" value="186.9亿" />
        <Item label="市盈" value="452.78" info sup="动" size={32} />
        <Cell>
          <MoreButton>更多</MoreButton>
        </Cell>
      </Quote>

      <News>
        <svg width="45" height="38" viewBox="0 0 45 38">
          <path d="M7 9H12L22 1.500Q27.500-1 27.500 4V34Q27.500 39 22 36.500L12 29H7Q0 29 0 22V16Q0 9 7 9Z" fill="#ff5200" />
          <path d="M31 12Q36 19 31 26M36.500 7.500Q46 19 36.500 30.500" stroke="#ff5a14" strokeWidth="3.600" fill="none" strokeLinecap="round" />
        </svg>
        <NewsText>龙虎榜：买入总额6.137亿元，卖出总额5.129亿...</NewsText>
        <Gap $w={25} />
        <Dot $d={19} $color="#f02424" />
        <Gap $w={30} />
        <Cross size={30} color="#999" width={3.2} />
      </News>

      <Periods>
        <Period>分时</Period>
        <Period>五日</Period>
        <Period $on>日K</Period>
        <Period>周K</Period>
        <Period>月K</Period>
        <Period $w={178}>
          <PeriodMore>更多<Down w={15} h={13} /></PeriodMore>
        </Period>
        <GearBox>
          <svg width="52" height="52" viewBox="0 0 52 52" fill="none" stroke={GREY} strokeWidth="3.400" strokeLinejoin="round">
            <path d="M21 2H31L33 8.500Q37 10 39.500 12.500L46 10.500L51 19.500L46 24V28L51 32.500L46 41.500L39.500 39.500Q37 42 33 43.500L31 50H21L19 43.500Q15 42 12.500 39.500L6 41.500L1 32.500L6 28V24L1 19.500L6 10.500L12.500 12.500Q15 10 19 8.500Z" transform="translate(1 1) scale(0.962)" />
            <circle cx="26" cy="26" r="8.800" />
          </svg>
        </GearBox>
      </Periods>

      <IndicatorRow $pt={6}>
        <Chip $w={105} $px={8} $spread>均线<Down w={15} h={12} /></Chip>
        <Gap $w={10} />
        <Metric $w={212} $size={36} $color={INK}>MA5:10.65<Arrow color={INK} /></Metric>
        <Metric $w={156} $size={36} $color="#f3b944">10:9.74<Arrow color="#f3b944" /></Metric>
        <Metric $w={180} $size={36} $color="#c01a7c">20:8.09<Arrow color="#c01a7c" /></Metric>
        <Chip $w={127} $ml={87} $px={4} $size={34.5} $spread>
          <Gap $w={2} />DK点<CornerMark />
        </Chip>
        <Chip $w={133} $ml={39}>前复权</Chip>
      </IndicatorRow>

      <ChartBox $h={636}>
        <KLine />
        <Controls>
          <Round>
            <svg width="30" height="34" viewBox="0 0 30 34" fill="none" stroke={ORANGE} strokeWidth="3">
              <path d="M17.500 2L3 17L17.500 32M28.500 2L14 17L28.500 32" />
            </svg>
          </Round>
          <Round>
            <svg width="34" height="34" viewBox="0 0 34 34"><path d="M0 17H34" stroke={ORANGE} strokeWidth="3" /></svg>
          </Round>
          <Round>
            <svg width="34" height="34" viewBox="0 0 34 34"><path d="M0 17H34M17 0V34" stroke={ORANGE} strokeWidth="3" /></svg>
          </Round>
          <Round>
            <svg width="26" height="34" viewBox="0 0 26 34"><path d="M19 2L4 17L19 32" stroke={ORANGE} strokeWidth="3" fill="none" /></svg>
          </Round>
          <Round $off>
            <svg width="26" height="34" viewBox="0 0 26 34"><path d="M7 2L22 17L7 32" stroke="#666" strokeWidth="3" fill="none" /></svg>
          </Round>
          <Round>
            <svg width="36" height="36" viewBox="0 0 36 36" fill="none" stroke={ORANGE} strokeWidth="3">
              <path d="M2.500 16V2.500H17M2.500 2.500L15 15M19 34H33.500V19M33.500 34L21 21" />
            </svg>
          </Round>
        </Controls>
        <Badge $d={18} $x={441} $color="#f22424" />
        <Badge $d={18} $x={897} $color="#f22424" />
      </ChartBox>

      <IndicatorRow>
        <Chip $w={145} $px={6} $size={36} $spread>MACD<Down w={15} h={12} /></Chip>
        <Gap $w={3} />
        <Metric $w={191} $size={38.5} $gap={8} $color={INK}>DIF:1.65<Arrow down color={INK} /></Metric>
        <Metric $w={206} $size={38.5} $gap={12} $color="#ecc020">DEA:1.51<Arrow color="#ecc020" /></Metric>
        <Metric $w={200} $size={38.5} $gap={10} $color="#cd2bd6">M:0.28<Arrow down color="#cd2bd6" /></Metric>
      </IndicatorRow>

      <ChartBox $h={310}>
        <Macd />
      </ChartBox>

      <Promo>
        <svg width="46" height="40" viewBox="0 0 46 40" fill="#ea5504">
          <rect x="1" y="13" width="3.500" height="16" />
          <path d="M9 11H17L40 4V0.500H45.500V39.500H41V36H36L30 34Q26 39 20 35L14 31V28H9Z" />
        </svg>
        <PromoText>这份“降成本”秘籍请收好！VIP融资利率通道&gt;&gt;</PromoText>
        <Divider />
        <Cross size={33} color={ORANGE} width={3} />
      </Promo>

      <Sections>
        {["股吧", "盘口", "资讯", "公告", "研报", "财务", "资料"].map((t, i) => (
          <SectionTab key={t} $on={i === 0}>{t}</SectionTab>
        ))}
      </Sections>

      <BottomBar>
        <IndexCell>
          <IndexTop>
            <svg width="21" height="7" viewBox="0 0 21 7"><path d="M0 7L10.500 0L21 7Z" fill="#777" /></svg>
            <Txt $size={39} $color="#d8282d">3844.38</Txt>
          </IndexTop>
          <IndexRow>
            <Txt $size={33.5} $color={GREY}>上证</Txt>
            <Txt $size={36.5} $color="#d8282d">0.25%</Txt>
          </IndexRow>
        </IndexCell>
        <Action><TradeIcon />交易</Action>
        <Action><PostIcon />发帖</Action>
        <Action><GridIcon />功能</Action>
        <Action $hot><AddIcon />加自选</Action>
      </BottomBar>

      <SystemNav>
        <svg width="42" height="48" viewBox="0 0 42 48"><path d="M2 1V47M20.500 1V47M39 1V47" stroke="#b0b0b0" strokeWidth="3.400" /></svg>
        <HomeKey />
        <svg width="28" height="50" viewBox="0 0 28 50"><path d="M26 2L3 25L26 48" fill="none" stroke="#b0b0b0" strokeWidth="3.600" /></svg>
      </SystemNav>
    </Screen>
  );
}
